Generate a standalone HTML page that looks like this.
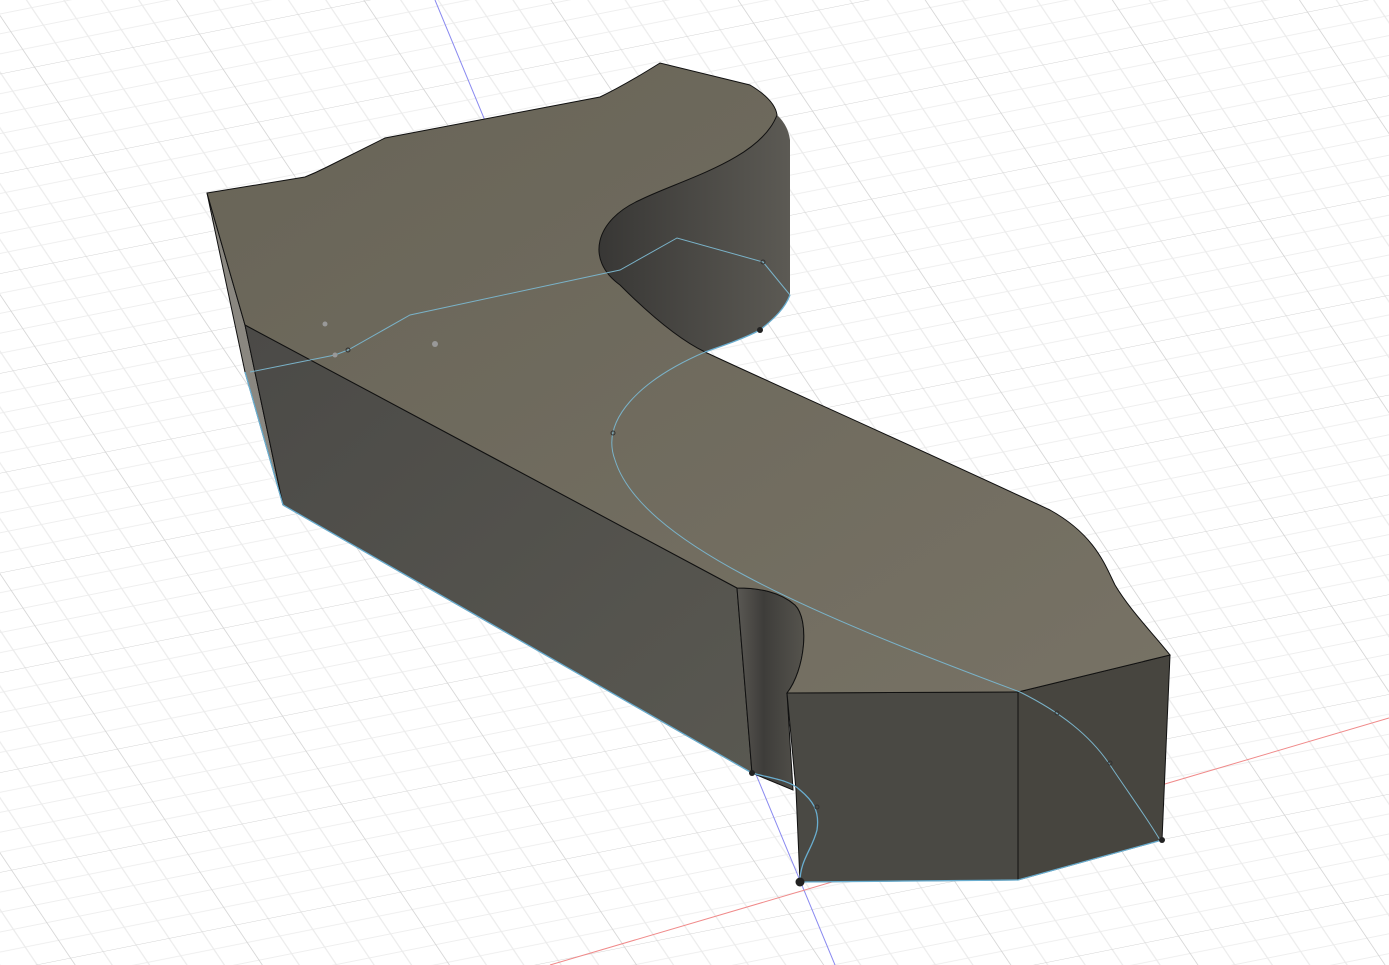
<!DOCTYPE html>
<html><head><meta charset="utf-8"><style>html,body{margin:0;padding:0;background:#fff;overflow:hidden}svg{display:block}</style></head>
<body>
<svg width="1389" height="965" viewBox="0 0 1389 965" xmlns="http://www.w3.org/2000/svg">
<defs>
<pattern id="g" width="100" height="100" patternUnits="userSpaceOnUse" patternTransform="matrix(1.65,-0.33,0.59,0.88,977,78)">
<g stroke="#ececec" stroke-width="0.8" fill="none">
<path d="M20 0V100M40 0V100M60 0V100M80 0V100M0 20H100M0 40H100M0 60H100M0 80H100"/>
</g>
<g stroke="#d2d2d2" stroke-width="1" fill="none"><path d="M0 0V100M0 0H100"/></g>
</pattern>
<linearGradient id="wall" x1="0" y1="0" x2="1" y2="0"><stop offset="0" stop-color="#383735"/><stop offset="1" stop-color="#5c5a54"/></linearGradient>
<linearGradient id="cv" x1="0" y1="0" x2="1" y2="0"><stop offset="0" stop-color="#5a5853"/><stop offset="0.4" stop-color="#3e3d3a"/><stop offset="1" stop-color="#55534d"/></linearGradient>
<linearGradient id="front" x1="0" y1="0" x2="1" y2="1"><stop offset="0" stop-color="#4b4a47"/><stop offset="1" stop-color="#595851"/></linearGradient>
<linearGradient id="top" x1="0" y1="0" x2="1" y2="1"><stop offset="0" stop-color="#686457"/><stop offset="1" stop-color="#777265"/></linearGradient>
</defs>
<rect width="1389" height="965" fill="#fff"/>
<rect width="1389" height="965" fill="url(#g)"/>
<line x1="435" y1="0" x2="835" y2="965" stroke="#8a8af0" stroke-width="1"/>
<line x1="550" y1="965" x2="1389" y2="718" stroke="#f08a8a" stroke-width="1"/>

<path d="M207,193 L245,325 L283,505 L245,372 Z" fill="#8a8780" stroke="#111" stroke-width="1"/>
<path d="M245,325 L737,588 L752,773 L283,505 Z" fill="url(#front)" stroke="#111" stroke-width="1"/>
<path d="M737,588 C760,588 780,592 795,605 C810,620 805,670 787,693 L793,790 L752,773 Z" fill="url(#cv)" stroke="#111" stroke-width="1"/>
<path d="M787,693 L1018,692 L1018,880 L800,882 L796,790 Z" fill="#4a4944" stroke="#111" stroke-width="1"/>
<path d="M1018,692 L1170,655 L1162,840 L1018,880 Z" fill="#47453f" stroke="#111" stroke-width="1"/>
<path d="M777,115 C760,160 680,180 640,200 C595,220 585,260 620,285 C650,315 680,340 705,352 C725,345 745,338 760,330 C775,318 785,308 790,295 L790,140 Q788,125 777,115 Z" fill="url(#wall)"/>
<path d="M207,193 L305,177 Q315,173 325,168 L385,138 L600,97 Q625,85 660,63 L750,85 Q775,100 777,115 C760,160 680,180 640,200 C595,220 585,260 620,285 C650,315 680,340 705,352 C760,378 900,440 1050,510 C1095,535 1105,565 1115,585 C1130,610 1150,630 1170,655 L1018,692 L787,693 C805,670 810,620 795,605 C780,592 760,588 737,588 L245,325 Z" fill="url(#top)" stroke="#111" stroke-width="1"/>

<g stroke="#6aaed0" stroke-width="1.3" fill="none">
<path d="M245,372 L283,505 L752,773"/>
<path d="M752,773 C770,778 790,780 800,790 C812,800 820,810 817,830 C812,850 800,860 800,882 L1018,880 L1162,840"/>
<path d="M705,352 C725,345 745,338 760,330 C775,318 785,308 790,295"/>
<path d="M250,372 L335,355 L348,350 L410,315 L620,270 L677,238 L763,262 L790,295" stroke="#7ab2c8" stroke-width="1"/>
<path d="M705,352 C640,380 600,420 615,460 C640,540 800,610 1020,692 C1060,712 1090,735 1110,765 C1130,795 1145,815 1160,840" stroke="#7ab2c8" stroke-width="1"/>
</g>
<g fill="#222">
<circle cx="800" cy="882" r="4.5"/>
<circle cx="752" cy="773" r="3"/>
<circle cx="1162" cy="840" r="3"/>
<circle cx="760" cy="330" r="3"/>
</g>
<g fill="#999">
<circle cx="325" cy="324" r="2.5"/><circle cx="435" cy="344" r="3"/><circle cx="335" cy="355" r="2.5"/>
</g>
<g fill="none" stroke="#333" stroke-width="1">
<circle cx="613" cy="433" r="2"/><circle cx="763" cy="262" r="2"/><circle cx="1057" cy="713" r="2"/><circle cx="1110" cy="763" r="2"/><circle cx="817" cy="807" r="2"/><circle cx="348" cy="350" r="2"/>
</g>
</svg>
</body></html>
